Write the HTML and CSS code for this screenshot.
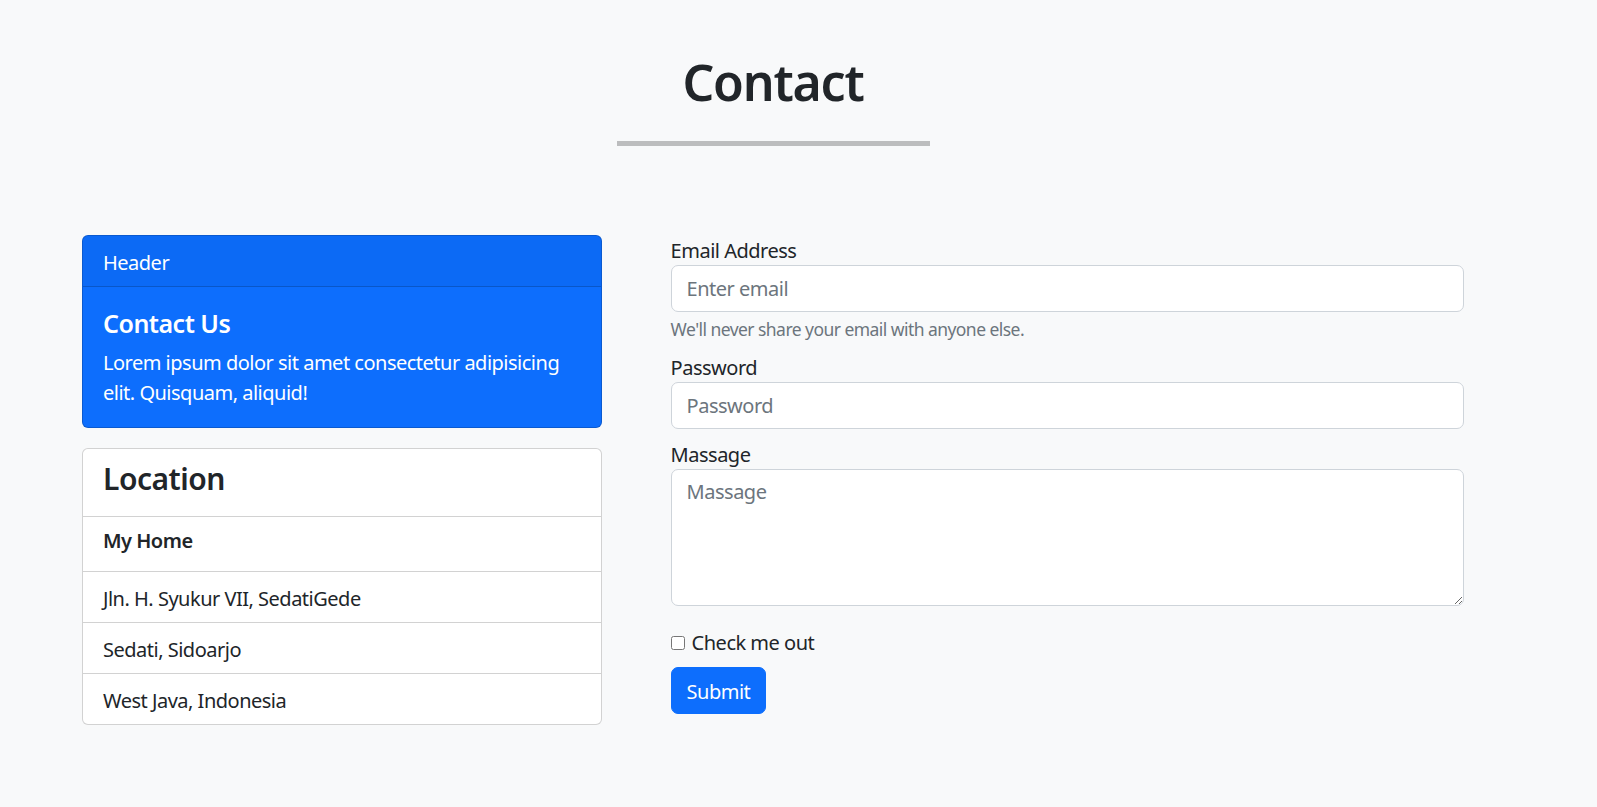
FILE: index.html
```html
<!DOCTYPE html>
<html lang="en">
<head>
<meta charset="utf-8">
<title>Contact</title>
<link rel="stylesheet" href="styles.css">
</head>
<body>
<main class="page">
  <header class="title-block">
    <h1 class="title">Contact</h1>
    <hr class="rule">
  </header>
  <div class="content">
    <aside class="side">
      <div class="card card-primary">
        <div class="card-header">Header</div>
        <div class="card-body">
          <h5 class="card-title">Contact Us</h5>
          <p class="card-text">Lorem ipsum dolor sit amet consectetur adipisicing elit. Quisquam, aliquid!</p>
        </div>
      </div>
      <ul class="card list">
        <li class="list-item list-head"><h4 class="list-title">Location</h4></li>
        <li class="list-item"><h6 class="list-sub">My Home</h6></li>
        <li class="list-item">Jln. H. Syukur VII, SedatiGede</li>
        <li class="list-item">Sedati, Sidoarjo</li>
        <li class="list-item">West Java, Indonesia</li>
      </ul>
    </aside>
    <form class="form">
      <div class="group">
        <label class="label" for="email">Email Address</label>
        <input class="control" type="email" id="email" placeholder="Enter email">
        <small class="help">We'll never share your email with anyone else.</small>
      </div>
      <div class="group">
        <label class="label" for="password">Password</label>
        <input class="control" type="password" id="password" placeholder="Password">
      </div>
      <div class="group group-last">
        <label class="label" for="msg">Massage</label>
        <textarea class="control area" id="msg" placeholder="Massage"></textarea>
      </div>
      <div class="check">
        <input class="check-box" type="checkbox" id="check">
        <label for="check">Check me out</label>
      </div>
      <button class="btn" type="submit">Submit</button>
    </form>
  </div>
</main>
</body>
</html>
```
FILE: styles.css
```css
* { box-sizing: border-box; }
html, body { margin: 0; padding: 0; }
body {
  background: #f8f9fa;
  color: #212529;
  font-family: "Noto Sans", "Open Sans", sans-serif;
  font-size: 20px;
  line-height: 30px;
  letter-spacing: -0.5px;
  height: 807px;
  overflow: hidden;
}
.page {
  width: 1382px;
  margin-left: 82px;
}
.title-block {
  padding-top: 52px;
  display: flex;
  flex-direction: column;
  align-items: center;
}
.title {
  margin: 0 0 -1px;
  font-size: 50px;
  line-height: 60px;
  font-weight: 600;
  letter-spacing: -1.2px;
}
.rule {
  margin: 30px 0 0;
  width: 313px;
  height: 5px;
  border: 0;
  background: #bcbdbe;
}
.content {
  margin-top: 89px;
  display: flex;
  gap: 69px;
  align-items: flex-start;
}
.side {
  width: 520px;
  display: flex;
  flex-direction: column;
  gap: 20px;
}
.card {
  border: 1px solid rgba(0,0,0,.175);
  border-radius: 6px;
  overflow: hidden;
}
.card-primary {
  background: #0d6efd;
  color: #fff;
}
.card-header {
  padding: 12px 20px 8px;
  background: rgba(0,0,0,.03);
  border-bottom: 1px solid rgba(0,0,0,.175);
}
.card-body {
  padding: 21px 20px 19px;
}
.card-title {
  margin: 0 0 10px;
  font-size: 25px;
  line-height: 30px;
  font-weight: 600;
}
.card-text { margin: 0; }
.list {
  margin: 0;
  padding: 0;
  list-style: none;
  background: #fff;
}
.list-item {
  padding: 12px 20px 8px;
  border-top: 1px solid rgba(0,0,0,.175);
}
.list-item:first-child { border-top: 0; }
.list-head { padding-bottom: 9px; }
.list-title {
  margin: 0 0 10px;
  font-size: 30px;
  line-height: 36px;
  font-weight: 600;
}
.list-sub {
  margin: 0 0 10px;
  font-size: 20px;
  line-height: 24px;
  font-weight: 600;
}
.form {
  width: 794px;
}
.group { margin-bottom: 10px; }
.group-last { margin-bottom: 20px; }
.label {
  display: block;
  padding-top: 1px;
  line-height: 29px;
}
.control {
  display: block;
  width: 100%;
  height: 47px;
  padding: 7px 15px;
  font: inherit;
  letter-spacing: -0.5px;
  color: #212529;
  background: #fff;
  border: 1px solid #ced4da;
  border-radius: 7px;
  outline: none;
}
.control::placeholder { color: #6c757d; }
.area {
  height: 137px;
  resize: vertical;
}
.help {
  display: block;
  margin-top: 4px;
  font-size: 17.5px;
  line-height: 26px;
  letter-spacing: -0.55px;
  color: #6c757d;
}
.check {
  display: flex;
  align-items: center;
  height: 30px;
  padding-top: 3px;
  margin-bottom: 11px;
}
.check-box {
  width: 14px;
  height: 14px;
  margin: 0 7px 0 0;
}
.btn {
  display: block;
  height: 47px;
  padding: 8px 15px 6px;
  font: inherit;
  letter-spacing: -0.5px;
  color: #fff;
  background: #0d6efd;
  border: 1px solid #0d6efd;
  border-radius: 7px;
}
```
